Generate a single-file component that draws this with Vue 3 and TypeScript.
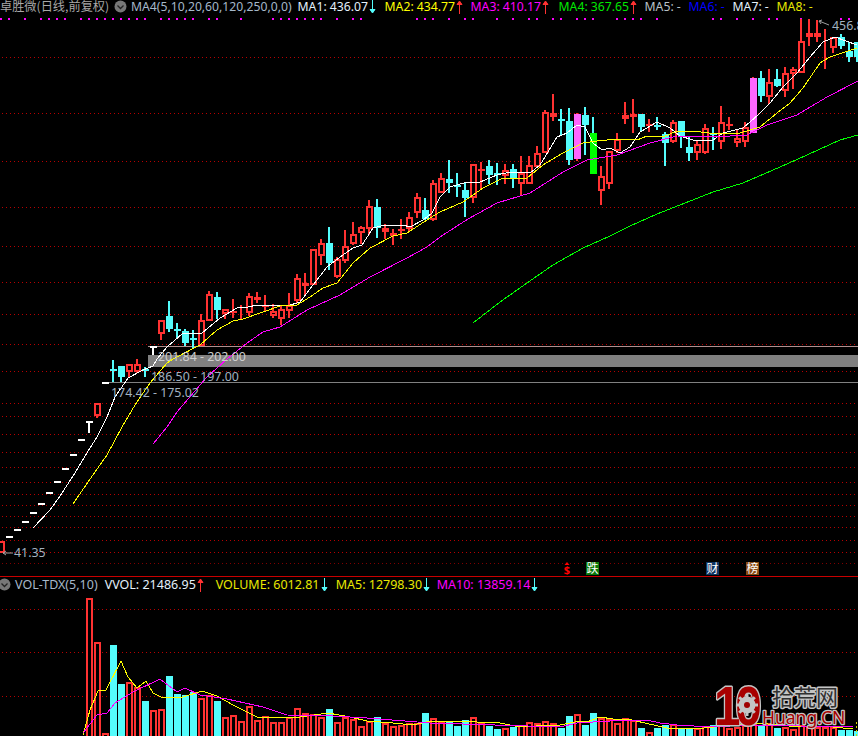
<script setup lang="ts">
type Kind = 'r' | 'c' | 'm' | 'g' | 'd' | 'T'
type Raw = [Kind, number, number, number, number]

const RED = '#ff3232'
const CYAN = '#54fcfc'
const PINK = '#ff66ff'
const GREEN = '#00ff00'
const WHITE = '#ffffff'

const raw: Raw[] = [
  ['r',541,541,553,553],['d',536,536,536,536],['d',529,529,529,529],['d',521,521,521,521],['d',512,512,512,512],
  ['d',503,503,503,503],['d',492,492,492,492],['d',481,481,481,481],['d',468,468,468,468],['d',454,454,454,454],
  ['d',439,439,439,439],['T',421,421,421,433],['r',403,403,416,418],['d',382,382,382,382],['c',360,369,369,382],
  ['c',366,366,377,382],['r',364,364,372,377],['r',359,364,372,373],['c',367,369,369,377],['T',346,346,346,355],
  ['r',320,320,334,340],['c',301,316,329,332],['c',323,329,329,338],['c',329,331,343,346],['c',330,338,338,348],
  ['r',314,320,346,346],['r',291,294,321,321],['c',292,297,310,319],['r',309,309,314,319],['r',299,311,311,318],
  ['r',305,311,313,320],['r',293,296,313,316],['r',292,297,300,303],['r',295,305,305,312],['r',304,311,316,318],
  ['r',305,309,319,325],['r',293,305,311,318],['r',274,278,301,303],['r',273,283,286,295],['r',249,249,285,285],
  ['r',239,243,256,265],['c',227,243,263,270],['r',257,259,277,278],['r',230,246,261,263],['r',222,234,244,245],
  ['r',226,227,233,244],['r',200,206,229,235],['c',199,207,228,238],['r',224,228,232,239],['r',229,233,236,245],
  ['r',219,229,229,239],['r',212,217,229,231],['r',193,197,213,218],['c',198,210,219,220],['r',180,183,220,221],
  ['r',173,178,193,193],['c',160,179,183,193],['c',173,185,185,197],['c',183,190,198,217],['r',164,164,198,203],
  ['r',162,169,169,190],['c',160,166,175,184],['c',163,173,173,185],['r',164,170,176,184],['c',164,169,178,188],
  ['r',156,173,184,195],['r',156,165,184,184],['r',146,153,167,167],['r',110,112,153,153],['r',94,113,117,121],
  ['c',109,119,119,135],['c',108,121,160,165],['m',113,114,159,161],['c',107,115,125,155],['g',117,133,174,174],
  ['r',166,176,191,205],['r',151,151,184,189],['r',133,139,151,153],['r',102,115,119,124],['r',99,114,117,133],
  ['c',114,114,127,131],['r',119,124,124,132],['c',117,125,125,130],['c',132,134,143,166],['r',120,122,142,143],
  ['c',121,121,137,148],['c',137,147,153,161],['r',140,144,153,160],['r',124,128,153,154],['c',127,133,133,150],
  ['r',106,122,142,149],['r',117,124,124,130],['r',130,138,143,147],['r',122,127,142,147],['m',77,78,133,133],
  ['c',71,78,96,102],['r',69,82,97,104],['c',69,79,86,87],['r',67,73,91,97],['r',67,69,74,89],
  ['r',19,41,73,73],['r',19,33,37,46],['r',20,33,37,42],['r',29,41,43,69],['r',37,37,48,53],
  ['c',34,37,46,49],['c',42,51,57,62],['c',42,42,57,62],
]

const px = (n: number): number => 8 * n

const colorOf = (k: Kind): string =>
  k === 'r' ? RED : k === 'c' ? CYAN : k === 'm' ? PINK : k === 'g' ? GREEN : WHITE

const candles = raw.map(([kind, high, top, bot, low], n) => {
  const flat = bot - top < 2
  return {
    key: n,
    x: px(n),
    kind,
    high,
    top,
    low,
    height: Math.max(2, bot - top),
    hollow: kind === 'r' && !flat,
    fill: colorOf(kind),
    wick: kind === 'g' ? CYAN : kind === 'm' ? RED : colorOf(kind),
    showWick: kind !== 'd',
    inner: bot - top - 2,
  }
})

const volTops: number[] = [
  598,642,733,645,684,682,687,701,710,709,
  676,694,695,692,698,695,701,717,715,721,
  706,720,716,722,722,717,708,713,714,717,
  709,722,717,719,726,721,717,723,726,725,
  723,723,713,718,722,722,726,720,717,723,
  726,729,728,727,725,722,723,721,723,728,
  716,714,725,713,718,719,723,718,720,728,
  732,728,725,724,728,729,728,726,725,720,
  728,727,725,722,725,723,728,727,729,725,
  727,727,727,727,730,730,731,
]
const volBars = volTops.map((top, i) => {
  const n = i + 11
  const k = raw[n][0]
  const solid = k === 'c' || k === 'g'
  return { key: n, x: px(n), top, solid }
})

const priceGrid = [57,113,161,207,246,282,314,344,371,403,416,434,452,467,482,494,505,516,527,540,552]
const volGrid = [609,652,696]

const pinkDots = [1,9,25,41,49,57,65,81,89,97,105,113,121,129,137,145,161,169,177,185,193,209,217,241,273,281,289,297,305,313,321,337,353,361,417,425,433,449,465,473,497,513,529,537,553,561,577,585,593,617,625,633,641,657,713,721,737,753,769,777,801,841,849]

const toPoints = (v: number[]): string => {
  const out: string[] = []
  for (let i = 0; i < v.length; i += 2) out.push(`${v[i]},${v[i + 1]}`)
  return out.join(' ')
}

const priceLines = [
  { key: 'ma1', color: WHITE, points: toPoints([33,528,50,510,60,496,75,473,84,458,90,448,97,437,107,417,115,397,128,378,143,370,153,366,157,359,167,347,182,334,202,333,220,318,237,308,248,307,257,305,272,305,287,306,300,302,313,285,327,267,340,257,353,248,362,245,373,228,385,225,403,225,410,227,423,220,432,213,440,197,450,187,467,182,480,182,497,175,510,172,530,173,540,165,557,137,567,133,577,125,585,127,593,143,602,150,610,148,620,153,630,147,640,132,657,122,670,128,680,136,693,140,713,140,723,133,743,128,758,115,770,103,783,87,797,73,810,57,823,42,835,37,857,45]) },
  { key: 'ma2', color: '#ffff00', points: toPoints([73,504,88,482,107,455,122,427,135,405,150,383,167,363,173,359,200,345,217,330,233,321,243,319,263,312,280,306,297,305,310,297,323,288,337,283,353,263,370,248,393,236,407,233,430,218,440,212,463,202,483,188,503,178,527,178,543,165,563,153,583,143,597,141,617,139,637,140,647,136,663,137,677,131,693,131,717,134,740,133,760,127,777,113,790,103,803,88,820,63,830,57,857,48]) },
  { key: 'ma3', color: '#ff00ff', points: toPoints([153,444,167,427,177,412,207,377,227,359,247,343,263,332,280,327,307,310,340,295,370,277,407,258,427,247,440,237,468,219,497,203,530,193,563,172,587,160,617,155,650,143,677,136,713,137,747,135,767,125,797,115,827,97,858,81]) },
  { key: 'ma4', color: '#00ff00', points: toPoints([473,323,500,302,527,283,553,265,583,248,610,236,630,226,657,214,680,205,713,192,743,183,780,167,807,155,840,140,858,135]) },
]

const volLines = [
  { key: 'v5', color: '#ffff00', points: toPoints([83,735,90,710,98,691,106,690,121,661,128,677,137,688,146,681,153,693,163,698,183,697,202,691,217,696,233,705,257,717,287,718,300,717,328,713,350,717,367,721,393,723,413,725,430,721,453,721,477,722,500,723,520,727,553,725,560,725,570,723,580,721,587,722,600,717,613,719,627,719,645,723,667,728,693,729,757,723,800,727,823,726,853,729]) },
  { key: 'v10', color: '#ff00ff', points: toPoints([83,733,97,715,107,713,115,703,133,692,160,679,177,692,185,688,200,695,227,699,263,707,287,715,333,716,367,718,430,723,560,727,577,723,593,722,627,720,647,720,660,723,677,725,710,727,750,725,800,726,853,727]) },
]

const gearTeeth = [0,45,90,135,180,225,270,315]

interface Legend { text: string; color: string; width: number; arrow?: 'up' | 'down' }

const priceLegend: Legend[] = [
  { text: 'MA1: 436.07', color: '#e4f0fb', width: 87, arrow: 'down' },
  { text: 'MA2: 434.77', color: '#ffff00', width: 86, arrow: 'up' },
  { text: 'MA3: 410.17', color: '#ff00ff', width: 88, arrow: 'up' },
  { text: 'MA4: 367.65', color: '#00e800', width: 86, arrow: 'up' },
  { text: 'MA5: -', color: '#b8c0c8', width: 44 },
  { text: 'MA6: -', color: '#0000ff', width: 44 },
  { text: 'MA7: -', color: '#e4f0fb', width: 44 },
  { text: 'MA8: -', color: '#e8e800', width: 44 },
]

const volLegend: Legend[] = [
  { text: 'VVOL: 21486.95', color: '#e4f0fb', width: 111, arrow: 'up' },
  { text: 'VOLUME: 6012.81', color: '#e8e800', width: 120, arrow: 'down' },
  { text: 'MA5: 12798.30', color: '#e8e800', width: 101, arrow: 'down' },
  { text: 'MA10: 13859.14', color: '#ff00ff', width: 104, arrow: 'down' },
]

const arrowColor = (a?: 'up' | 'down'): string => (a === 'up' ? RED : CYAN)
</script>

<template>
  <div class="screen">
    <section class="price">
      <header class="legend">
        <span class="title">卓胜微(日线,前复权)</span>
        <svg class="chev" viewBox="0 0 13 13" width="13" height="13">
          <circle cx="6.5" cy="6.5" r="6" fill="#777" />
          <path d="M3.5 5.5 L6.5 8.5 L9.5 5.5" fill="none" stroke="#222" stroke-width="1.3" />
        </svg>
        <span class="params">MA4(5,10,20,60,120,250,0,0)</span>
        <span
          v-for="it in priceLegend"
          :key="it.text"
          class="item"
          :style="{ color: it.color, width: it.width + 'px' }"
        >
          <span>{{ it.text }}</span>
          <svg v-if="it.arrow" class="arrow" viewBox="0 0 7 14" width="7" height="14">
            <path v-if="it.arrow === 'down'" d="M3.5 0 V10 M1 9.5 H6 L3.5 13 Z" :stroke="arrowColor(it.arrow)" :fill="arrowColor(it.arrow)" />
            <path v-else d="M3.5 14 V4 M1 4.5 H6 L3.5 1 Z" :stroke="arrowColor(it.arrow)" :fill="arrowColor(it.arrow)" />
          </svg>
        </span>
      </header>

      <svg class="canvas" viewBox="0 18 858 558" width="858" height="558">
        <g class="crisp">
          <rect v-for="x in pinkDots" :key="x" :x="x - 1" y="18" width="2" height="2" fill="#ff00ff" />
          <line v-for="y in priceGrid" :key="y" x1="2" x2="858" :y1="y + 0.5" :y2="y + 0.5" class="dots" />
          <line x1="2" x2="858" y1="563.5" y2="563.5" class="dots faint" />

          <rect x="148" y="355" width="710" height="12" fill="#808080" />
          <line x1="148" x2="858" y1="346.5" y2="346.5" class="range-top" />
          <line x1="103" x2="858" y1="382.5" y2="382.5" class="range-bottom" />

          <g v-for="c in candles" :key="c.key">
            <rect v-if="c.showWick" :x="c.x" :y="c.high" width="2" :height="c.low - c.high" :fill="c.wick" />
            <rect v-if="c.hollow" :x="c.x - 1" :y="c.top + 1" width="5" :height="c.inner" fill="#000" :stroke="c.fill" stroke-width="2" />
            <rect v-else :x="c.x - 2" :y="c.top" width="7" :height="c.height" :fill="c.fill" />
          </g>
        </g>

        <polyline v-for="l in priceLines" :key="l.key" :points="l.points" :stroke="l.color" class="ma" />

        <text x="158" y="361" class="note on-band">201.84 - 202.00</text>
        <text x="151" y="381" class="note">186.50 - 197.00</text>
        <text x="111" y="397" class="note">174.42 - 175.02</text>
        <text x="14" y="557" class="note">41.35</text>
        <text x="832" y="30" class="note">456.8</text>
        <path d="M3 553 H13 M3 553 l3 -2 M3 553 l3 2" class="pointer" />
        <path d="M819 21 L829 25 M819 21 l3 -1 M819 21 l2 3" class="pointer" />

        <g class="crisp">
          <rect x="586" y="562" width="13" height="13" fill="#0a7a0a" />
          <rect x="706" y="562" width="13" height="13" fill="#0f3462" />
          <rect x="746" y="562" width="13" height="13" fill="#8a4a12" />
        </g>
        <text x="567" y="574" class="dollar">$</text>
        <path d="M567 562 l2.5 3 h-5 z" fill="#ff0000" />
        <text x="586.5" y="573" class="badge">跌</text>
        <text x="706.5" y="573" class="badge">财</text>
        <text x="746.5" y="573" class="badge">榜</text>
      </svg>
    </section>

    <section class="volume">
      <header class="legend vol-legend">
        <svg class="chev first" viewBox="0 0 13 13" width="13" height="13">
          <circle cx="6.5" cy="6.5" r="6" fill="#777" />
          <path d="M3.5 5.5 L6.5 8.5 L9.5 5.5" fill="none" stroke="#222" stroke-width="1.3" />
        </svg>
        <span class="params">VOL-TDX(5,10)</span>
        <span
          v-for="it in volLegend"
          :key="it.text"
          class="item"
          :style="{ color: it.color, width: it.width + 'px' }"
        >
          <span>{{ it.text }}</span>
          <svg v-if="it.arrow" class="arrow" viewBox="0 0 7 14" width="7" height="14">
            <path v-if="it.arrow === 'down'" d="M3.5 0 V10 M1 9.5 H6 L3.5 13 Z" :stroke="arrowColor(it.arrow)" :fill="arrowColor(it.arrow)" />
            <path v-else d="M3.5 14 V4 M1 4.5 H6 L3.5 1 Z" :stroke="arrowColor(it.arrow)" :fill="arrowColor(it.arrow)" />
          </svg>
        </span>
      </header>

      <svg class="canvas" viewBox="0 597 858 139" width="858" height="139">
        <g class="crisp">
          <line v-for="y in volGrid" :key="y" x1="2" x2="858" :y1="y + 0.5" :y2="y + 0.5" class="dots" />
          <g v-for="b in volBars" :key="b.key">
            <rect v-if="b.solid" :x="b.x - 2" :y="b.top" width="7" :height="740 - b.top" fill="#54fcfc" />
            <rect v-else :x="b.x - 1" :y="b.top + 1" width="5" :height="745 - b.top" fill="#000" stroke="#ff3232" stroke-width="2" />
          </g>
          <line x1="856.5" x2="856.5" y1="722" y2="736" class="yellow-dots" />
        </g>
        <polyline v-for="l in volLines" :key="l.key" :points="l.points" :stroke="l.color" class="ma" />

        <g class="mark">
          <text transform="translate(714 725) scale(0.85 1)" class="mark-one">10</text>
          <circle cx="747" cy="705" r="8.5" fill="#c4c4c4" />
          <rect
            v-for="a in gearTeeth"
            :key="a"
            x="745.5"
            y="694"
            width="3"
            height="4"
            fill="#c4c4c4"
            :transform="`rotate(${a} 747 705)`"
          />
          <circle cx="747" cy="705" r="3" fill="#a00000" />
          <text x="772" y="705" class="mark-cn">拾荒网</text>
          <text x="762" y="724" class="mark-en">Huang.CN</text>
        </g>
      </svg>
    </section>
  </div>
</template>

<style scoped>
.screen {
  width: 858px;
  height: 736px;
  background: #000;
  overflow: hidden;
  display: flex;
  flex-direction: column;
  font-family: "Noto Sans", "Noto Sans CJK SC", sans-serif;
}
.price {
  height: 576px;
  flex: none;
}
.volume {
  flex: 1;
  border-top: 1px solid #c80000;
}
.legend {
  height: 18px;
  display: flex;
  align-items: flex-start;
  font-size: 12.2px;
  line-height: 13px;
  white-space: nowrap;
}
.vol-legend {
  height: 20px;
  padding-top: 1px;
  box-sizing: border-box;
  font-size: 12.5px;
}
.title {
  color: #a8a8a8;
  width: 114px;
  font-family: "Noto Sans CJK SC", sans-serif;
  font-size: 12.2px;
}
.chev {
  flex: none;
  margin-right: 4px;
}
.chev.first {
  margin-left: -2px;
  margin-right: 4px;
}
.params {
  color: #a6b8ca;
  margin-right: 6px;
}
.vol-legend .params {
  margin-right: 7px;
}
.item {
  display: flex;
  gap: 1px;
  flex: none;
}
.arrow {
  flex: none;
}
.canvas {
  display: block;
}
.crisp {
  shape-rendering: crispEdges;
}
.dots {
  stroke: #b80000;
  stroke-width: 1;
  stroke-dasharray: 1 3;
}
.faint {
  stroke: #800000;
}
.range-top {
  stroke: #b09090;
  stroke-width: 1;
}
.range-bottom {
  stroke: #808080;
  stroke-width: 1;
}
.yellow-dots {
  stroke: #d8d800;
  stroke-width: 1;
  stroke-dasharray: 2 2;
}
.ma {
  fill: none;
  stroke-width: 1;
  shape-rendering: crispEdges;
}
.note {
  font-size: 12.4px;
  fill: #a2b2c0;
}
.on-band {
  fill: #cfcfcf;
}
.pointer {
  fill: none;
  stroke: #a0a0a0;
  stroke-width: 1;
}
.dollar {
  font-size: 11px;
  font-weight: 700;
  fill: #ff0000;
  text-anchor: middle;
}
.badge {
  font-size: 12px;
  fill: #fff;
  font-family: "Noto Sans CJK SC", sans-serif;
}
.mark text {
  paint-order: stroke;
  stroke-linejoin: round;
}
.mark-one {
  font-size: 56px;
  font-weight: 900;
  letter-spacing: -6px;
  font-family: "Liberation Sans", sans-serif;
  fill: #a80000;
  stroke: #c4c4c4;
  stroke-width: 3px;
}
.mark-cn {
  font-size: 22px;
  font-family: "Noto Sans CJK SC", sans-serif;
  fill: #303030;
  stroke: #c4c4c4;
  stroke-width: 3px;
}
.mark-en {
  font-size: 17.5px;
  font-family: "Noto Sans", sans-serif;
  fill: #a80000;
  stroke: #c4c4c4;
  stroke-width: 2.5px;
}
</style>

<style>
body {
  background: #000;
}
</style>
